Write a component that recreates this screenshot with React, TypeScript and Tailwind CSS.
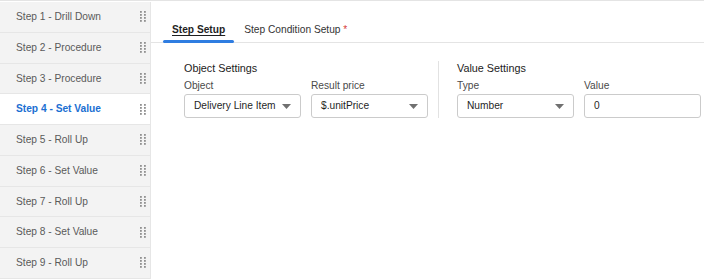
import React from 'react';

const steps = [
  'Step 1 - Drill Down',
  'Step 2 - Procedure',
  'Step 3 - Procedure',
  'Step 4 - Set Value',
  'Step 5 - Roll Up',
  'Step 6 - Set Value',
  'Step 7 - Roll Up',
  'Step 8 - Set Value',
  'Step 9 - Roll Up',
];

function DragHandle() {
  return (
    <svg width="6" height="11" viewBox="0 0 6 11" className="text-[#909090]">
      {[0, 1, 2, 3].map((r) => (
        <g key={r}>
          <rect x="0" y={r * 3} width="1.8" height="1.8" fill="currentColor" />
          <rect x="4" y={r * 3} width="1.8" height="1.8" fill="currentColor" />
        </g>
      ))}
    </svg>
  );
}

function Select({ value }: { value: string }) {
  return (
    <div className="flex h-[24px] w-[117px] items-center justify-between rounded-[3px] border border-[#cbcbcb] bg-white pl-[9px] pr-[9px] text-[10.2px] text-[#1f1f1f]">
      <span>{value}</span>
      <svg width="9" height="5" viewBox="0 0 9 5">
        <path d="M0 0 H9 L4.5 5 Z" fill="#707070" />
      </svg>
    </div>
  );
}

function Field({ label, children }: { label: string; children: React.ReactNode }) {
  return (
    <div className="flex flex-col gap-[1px]">
      <span className="text-[10.2px] leading-[14px] text-[#4a4a4a]">{label}</span>
      {children}
    </div>
  );
}

export default function App() {
  return (
    <div
      className="flex h-[280px] w-[704px] overflow-hidden bg-white"
      style={{ fontFamily: '"Liberation Sans", Arial, sans-serif' }}
    >
      {/* sidebar */}
      <div className="flex w-[151px] shrink-0 flex-col border-t border-[#e4e4e4] bg-white pt-[1px]">
        {steps.map((s, i) => {
          const active = i === 3;
          return (
            <div
              key={s}
              className={`flex h-[30.75px] shrink-0 items-center justify-between border-b border-r border-[#e6e6e6] pl-[16px] pr-[4px] text-[10.2px] ${
                active ? 'bg-white font-bold text-[#1b6fd2]' : 'bg-[#f3f3f3] text-[#5a5a5a]'
              }`}
            >
              <span>{s}</span>
              <DragHandle />
            </div>
          );
        })}
      </div>

      {/* main */}
      <div className="flex flex-1 flex-col border-t border-[#e4e4e4]">
        <div className="flex h-[42px] items-end border-b border-[#e4e4e4] pl-[12px]">
          <div className="-mb-px flex h-full flex-col justify-end">
            <span className="px-[9px] pb-[3px] text-[10.2px] leading-[14px] font-bold text-[#1f1f1f] underline underline-offset-[2px]">
              Step Setup
            </span>
            <div className="h-[3px] rounded-sm bg-[#2f7de1]" />
          </div>
          <div className="flex h-full flex-col justify-end">
            <span className="px-[10px] pb-[5px] text-[10.2px] leading-[14px] text-[#333]">
              Step Condition Setup <span className="text-[#d63a3a]">*</span>
            </span>
          </div>
        </div>

        <div className="flex pl-[33px] pt-[18px]">
          <div className="flex flex-col gap-[3px] pr-[10px]">
            <span className="text-[10.8px] leading-[15px] text-[#222]">Object Settings</span>
            <div className="flex gap-[10px]">
              <Field label="Object">
                <Select value="Delivery Line Item" />
              </Field>
              <Field label="Result price">
                <Select value="$.unitPrice" />
              </Field>
            </div>
          </div>
          <div className="mr-[18px] w-px self-stretch bg-[#e2e2e2]" />
          <div className="flex flex-col gap-[3px]">
            <span className="text-[10.8px] leading-[15px] text-[#222]">Value Settings</span>
            <div className="flex gap-[10px]">
              <Field label="Type">
                <Select value="Number" />
              </Field>
              <Field label="Value">
                <div className="flex h-[24px] w-[117px] items-center rounded-[3px] border border-[#cbcbcb] bg-white pl-[9px] text-[10.2px] text-[#1f1f1f]">
                  0
                </div>
              </Field>
            </div>
          </div>
        </div>
      </div>
    </div>
  );
}
